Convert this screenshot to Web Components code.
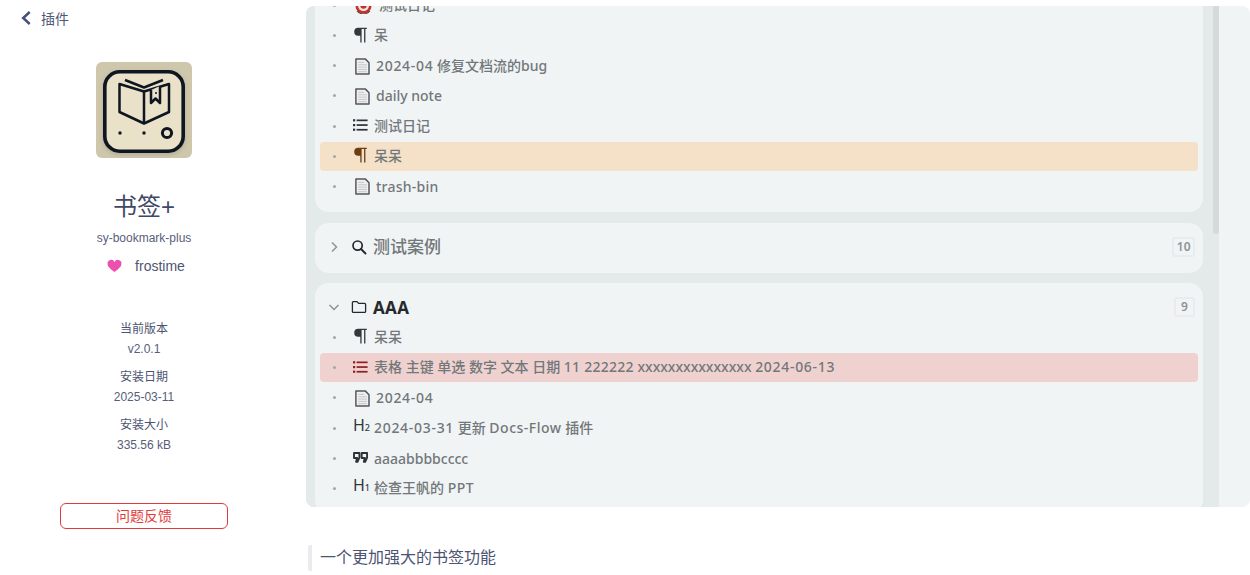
<!DOCTYPE html>
<html lang="zh">
<head>
<meta charset="utf-8">
<title>书签+</title>
<style>
html,body{margin:0;height:575px;overflow:hidden;background:#fff}
body{font-family:"Liberation Sans","Noto Sans CJK SC",sans-serif;color:#4c5472}
.n{letter-spacing:.7px}
.m{letter-spacing:.5px}
.s{letter-spacing:.25px}
</style>
</head>
<body>
<app-shell>
  <plugin-sidebar slot="side"></plugin-sidebar>
  <bookmark-panel slot="panel">
    <bookmark-group clipped>
      <bookmark-row icon="target">测试日记</bookmark-row>
      <bookmark-row icon="para">呆</bookmark-row>
      <bookmark-row icon="doc"><span class="n">2024-04</span> 修复文档流的bug</bookmark-row>
      <bookmark-row icon="doc">daily note</bookmark-row>
      <bookmark-row icon="list">测试日记</bookmark-row>
      <bookmark-row icon="para" tone="orange">呆呆</bookmark-row>
      <bookmark-row icon="doc" nudge><span class="s">trash-bin</span></bookmark-row>
    </bookmark-group>
    <bookmark-group title="测试案例" icon="search" count="10" collapsed></bookmark-group>
    <bookmark-group title="AAA" icon="folder" count="9" strong>
      <bookmark-row icon="para">呆呆</bookmark-row>
      <bookmark-row icon="list" tone="red">表格 主键 单选 数字 文本 日期 <span class="s">11 222222</span> xxxxxxxxxxxxxxx <span class="n">2024-06-13</span></bookmark-row>
      <bookmark-row icon="doc"><span class="n">2024-04</span></bookmark-row>
      <bookmark-row icon="h2"><span class="n">2024-03-31</span> 更新 <span class="m">Docs-Flow</span> 插件</bookmark-row>
      <bookmark-row icon="quote">aaaabbbbcccc</bookmark-row>
      <bookmark-row icon="h1">检查王帆的 <span class="m">PPT</span></bookmark-row>
    </bookmark-group>
  </bookmark-panel>
  <readme-quote slot="quote">一个更加强大的书签功能</readme-quote>
</app-shell>

<script>
const ICONS = {
  target:`<svg viewBox="0 0 16 16" width="17" height="17"><circle cx="8" cy="8" r="7.6" fill="#c9302c"/><circle cx="8" cy="8" r="5.2" fill="#f2e6e0"/><circle cx="8" cy="8" r="3" fill="#c9302c"/><path d="M2 13a7.6 7.6 0 0 0 12 0" fill="none" stroke="#6d3a38" stroke-width="1"/></svg>`,
  para:`<svg viewBox="0 0 14 16" width="14" height="16"><path d="M5.2.8H13.8V2.1H12.4V15.4H11.1V2.1H8.6V15.4H7.3V8.8H5.2A4 4 0 0 1 5.2.8Z" fill="var(--ic,#33383b)"/></svg>`,
  doc:`<svg viewBox="0 0 15 17" width="15" height="17"><path d="M.9.9H10.2L14 4.7V16.1H.9Z" fill="#eeefee" stroke="#55585b" stroke-width="1.5" stroke-linejoin="round"/><path d="M3.2 4.4H9M3.2 6.8H11.8M3.2 9.1H11.8M3.2 11.4H11.8M3.2 13.7H11.8" stroke="#c5c8c8" stroke-width="1"/></svg>`,
  list:`<svg viewBox="0 0 15 14" width="15" height="14"><g fill="var(--ic,#2e3235)"><rect x="0" y="1.2" width="2.2" height="2.2"/><rect x="0" y="6" width="2.2" height="2.2"/><rect x="0" y="10.6" width="2.2" height="2.2"/><rect x="3.6" y="1.5" width="11" height="1.7"/><rect x="3.6" y="6.2" width="11" height="1.7"/><rect x="3.6" y="10.9" width="11" height="1.7"/></g></svg>`,
  quote:`<svg viewBox="0 0 15 11" width="15" height="11"><path d="M1 1H6.4V5.6L4.5 9.8H3.1L4.1 6H1ZM8.7 1H14.1V5.6L12.2 9.8H10.8L11.8 6H8.7Z" fill="none" stroke="#2e3235" stroke-width="1.9" stroke-linejoin="round"/></svg>`,
  search:`<svg viewBox="0 0 16 16" width="16" height="16"><circle cx="6.6" cy="6.6" r="4.6" fill="none" stroke="#26292c" stroke-width="1.7"/><path d="M10 10L14.5 14.5" stroke="#26292c" stroke-width="1.9" stroke-linecap="round"/></svg>`,
  folder:`<svg viewBox="0 0 16 16" width="16" height="16"><path d="M1.4 3.6A1 1 0 0 1 2.4 2.6H6L7.6 4.4H13.6A1 1 0 0 1 14.6 5.4V12.4A1 1 0 0 1 13.6 13.4H2.4A1 1 0 0 1 1.4 12.4Z" fill="none" stroke="#26292c" stroke-width="1.3" stroke-linejoin="round"/></svg>`
};

customElements.define('app-shell', class extends HTMLElement {
  constructor(){super();this.attachShadow({mode:'open'}).innerHTML=`
  <style>
    :host{display:flex;height:575px;overflow:hidden}
    .side{flex:0 0 288px}
    .main{flex:1;min-width:0;padding:6px 0 0 18px;display:flex;flex-direction:column}
    .q{margin:38px 0 0 2px}
  </style>
  <div class="side"><slot name="side"></slot></div>
  <div class="main"><slot name="panel"></slot><div class="q"><slot name="quote"></slot></div></div>`}
});

customElements.define('plugin-sidebar', class extends HTMLElement {
  constructor(){super();this.attachShadow({mode:'open'}).innerHTML=`
  <style>
    :host{display:flex;flex-direction:column;align-items:center;height:575px;color:#4c5472;font-family:"Liberation Sans","Noto Sans CJK SC",sans-serif}
    .back{align-self:stretch;display:flex;align-items:center;gap:10px;padding:8px 0 0 21px;height:19px;font-size:14px;color:#4f5776}
    .logo{margin-top:35px;display:block;border-radius:6px}
    h1{margin:33px 0 0;font-size:24px;line-height:32px;font-weight:400;color:#3f4866}
    .pkg{margin-top:7px;font-size:12px;line-height:16px;color:#59607c}
    .author{margin-top:10px;display:flex;align-items:center;gap:13px;font-size:14px;line-height:20px;color:#4f5672;margin-left:4px}
    dl{margin:43px 0 0;text-align:center;font-size:12px}
    dt{line-height:20px;color:#4c5472}
    dd{margin:0 0 8px;line-height:20px;color:#565e7b}
    button{margin-top:40px;width:168px;height:26px;box-sizing:border-box;background:#fff;border:1px solid #e23a3a;border-radius:6px;color:#e23a3a;font:14px "Liberation Sans","Noto Sans CJK SC",sans-serif;padding:0 0 2px}
  </style>
  <div class="back"><svg viewBox="0 0 10 14" width="10" height="14"><path d="M8.7 1L2.2 7L8.7 13" fill="none" stroke="#47507a" stroke-width="2.5"/></svg><span>插件</span></div>
  <svg class="logo" viewBox="0 0 96 96" width="96" height="96">
    <defs>
      <filter id="b" x="-20%" y="-20%" width="140%" height="140%"><feGaussianBlur stdDeviation="2.6"/></filter>
      <filter id="s"><feGaussianBlur stdDeviation="0.5"/></filter>
    </defs>
    <rect width="96" height="96" fill="#cfc7ab"/>
    <rect x="8" y="11" width="80" height="81" rx="15" fill="#8d8a74" opacity=".55" filter="url(#b)"/>
    <g filter="url(#s)">
      <rect x="8.8" y="9.8" width="78.4" height="79.4" rx="15" fill="#e9e2c8" stroke="#0d1520" stroke-width="3.6"/>
      <g fill="none" stroke="#0d1520" stroke-width="2.5" stroke-linejoin="round">
        <path d="M29 18L48 25.5L67 18"/>
        <path d="M23.5 22L48 29.5L73 22V50L48 61.5L23.5 50Z"/>
        <path d="M48 30V61"/>
        <path d="M55 28V41L59.5 36.5L64 41V24" fill="#e9e2c8"/>
      </g>
      <circle cx="60" cy="31" r="1" fill="#0d1520"/>
      <circle cx="24" cy="71" r="1.7" fill="#0d1520"/>
      <circle cx="48" cy="71" r="1.7" fill="#0d1520"/>
      <circle cx="71" cy="71" r="4.6" fill="none" stroke="#0d1520" stroke-width="3"/>
    </g>
  </svg>
  <h1>书签+</h1>
  <div class="pkg">sy-bookmark-plus</div>
  <div class="author"><svg viewBox="0 0 16 14" width="15" height="14"><path d="M8 13.4C3 9.6.6 7.4.6 4.5A3.8 3.8 0 0 1 8 3.1 3.8 3.8 0 0 1 15.4 4.5C15.4 7.4 13 9.6 8 13.4Z" fill="#ec4fae"/></svg><span>frostime</span></div>
  <dl>
    <dt>当前版本</dt><dd>v2.0.1</dd>
    <dt>安装日期</dt><dd>2025-03-11</dd>
    <dt>安装大小</dt><dd>335.56 kB</dd>
  </dl>
  <button type="button">问题反馈</button>`}
});

customElements.define('bookmark-panel', class extends HTMLElement {
  constructor(){super();this.attachShadow({mode:'open'}).innerHTML=`
  <style>
    :host{display:flex;height:501px;background:#f0f4f5;border-radius:8px;overflow:hidden;flex:none}
    .scroll{width:913px;flex:none;display:flex;background:#e4e9e9;overflow:hidden;padding-left:9px;box-sizing:border-box}
    .content{width:888px;flex:none;margin-top:-15px;display:flex;flex-direction:column;gap:10.5px}
    .bar{width:16px;flex:none;display:flex;justify-content:flex-end}
    .thumb{width:6px;height:228px;background:#d4dbda;border-radius:0 0 3px 3px}
  </style>
  <div class="scroll"><div class="content"><slot></slot></div><div class="bar"><div class="thumb"></div></div></div>`}
});

customElements.define('bookmark-group', class extends HTMLElement {
  constructor(){
    super();
    const title=this.getAttribute('title'),icon=this.getAttribute('icon'),count=this.getAttribute('count');
    const collapsed=this.hasAttribute('collapsed'),strong=this.hasAttribute('strong');
    const head = title ? `<div class="head ${strong?'strong':''}">
      <svg class="chev" viewBox="0 0 12 12" width="12" height="12"><path d="${collapsed?'M4 1.5L8.5 6L4 10.5':'M1.5 4L6 8.5L10.5 4'}" fill="none" stroke="#8d9396" stroke-width="1.5"/></svg>
      <span class="ic">${ICONS[icon]}</span><span class="t">${title}</span>
      <span class="count">${count}</span></div>` : '';
    this.attachShadow({mode:'open'}).innerHTML=`
    <style>
      :host{display:block;background:#f0f4f5;border-radius:14px;flex:none;padding:${title?'10px':'0'} 5px ${collapsed?'10px':'11.3px'};font-family:"Noto Sans","Noto Sans CJK SC",sans-serif}
      :host([clipped]){border-radius:0 0 14px 14px}
      .head{display:flex;align-items:center;height:28px;padding-bottom:2px;color:#72777a;font-size:17px}
      .chev{margin-left:8px;flex:none}
      .ic{margin-left:11px;display:flex;flex:none}
      .t{margin-left:6px;font-weight:500;line-height:22px;margin-top:1px}
      .strong{color:#26292c}
      .strong .t{font-weight:700;letter-spacing:.3px}
      .count{margin-left:auto;margin-right:3px;min-width:12px;height:16px;padding:0 2.5px;border:2px solid #e8ecee;border-radius:3px;font-size:12px;line-height:16px;text-align:center;color:#8f9394;font-weight:600}
      .list{display:flex;flex-direction:column;gap:1.5px}
    </style>
    ${head}
    <div class="list"><slot></slot></div>`;
  }
});

customElements.define('bookmark-row', class extends HTMLElement {
  constructor(){
    super();
    const icon=this.getAttribute('icon');
    let glyph;
    if(icon==='h1'||icon==='h2') glyph=`<span class="h">H<small>${icon[1]}</small></span>`;
    else glyph=ICONS[icon];
    this.attachShadow({mode:'open'}).innerHTML=`
    <style>
      :host{display:flex;align-items:center;height:28.7px;border-radius:4px;color:#72777a;font-size:14px;font-family:"Noto Sans","Noto Sans CJK SC",sans-serif}
      :host([tone=orange]){background:#f4e1c8;--ic:#6b3d10}
      :host([tone=red]){background:#efd2cf;--ic:#8c2020}
      :host([icon=doc]) .ic{padding-left:2px;box-sizing:border-box;margin-top:1px}
      :host([icon=doc]) .txt{margin-left:7px;margin-top:0}
      :host([icon=doc][nudge]) .txt{margin-top:2px}
      :host([icon=quote]) .txt{margin-top:1px}
      :host([icon=list]) .ic{margin-top:-2px}
      :host([icon=target]) .ic{padding-left:2px;box-sizing:border-box;margin-top:0}
      :host([icon=target]) .txt{margin-left:10px}
      .dot{margin-left:13px;width:3px;height:3px;border-radius:50%;background:#a3a8aa;flex:none}
      .ic{margin-left:17px;width:16px;height:18px;display:flex;align-items:center;justify-content:flex-start;flex:none;margin-top:-2px}
      .ic svg{flex:none}
      .h{font-size:16px;font-weight:400;color:#33383b;line-height:18px;white-space:nowrap;margin-top:-2px}
      .h small{font-size:9px;font-weight:500}
      .txt{margin-left:5px;white-space:nowrap;font-weight:500;line-height:20px;margin-top:-1px}
    </style>
    <span class="dot"></span><span class="ic">${glyph}</span><span class="txt"><slot></slot></span>`;
  }
});

customElements.define('readme-quote', class extends HTMLElement {
  constructor(){super();this.attachShadow({mode:'open'}).innerHTML=`
  <style>
    :host{display:block;border-left:4px solid #e9ebee;border-radius:2px;padding:0 0 4px 8px;font:16px/22px "Noto Sans CJK SC",sans-serif;color:#4c5472}
  </style><slot></slot>`}
});
</script>
</body>
</html>
